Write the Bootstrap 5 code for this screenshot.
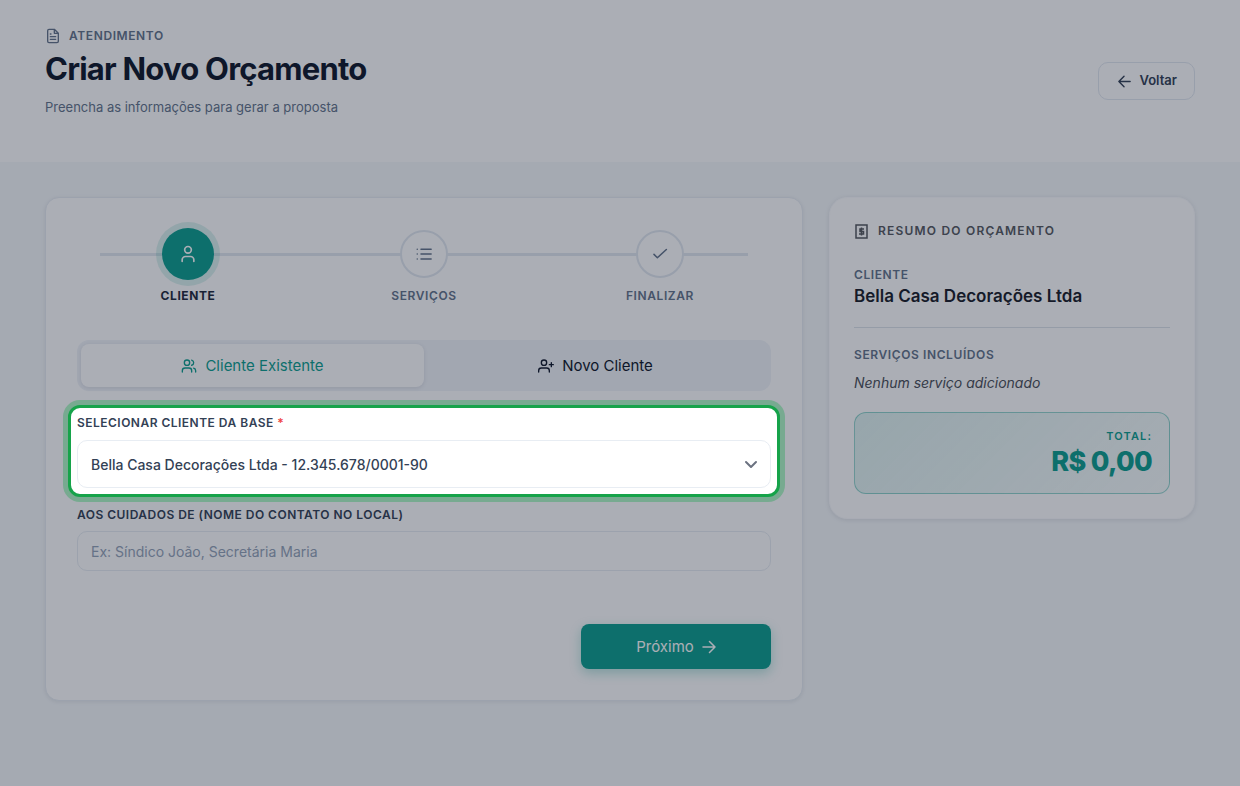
<!DOCTYPE html>
<html lang="pt-BR">
<head>
<meta charset="utf-8">
<meta name="viewport" content="width=device-width, initial-scale=1">
<title>Criar Novo Orçamento</title>
<link href="https://cdn.jsdelivr.net/npm/bootstrap@5.3.0/dist/css/bootstrap.min.css" rel="stylesheet">
<style>
  :root { --teal: #0d9f8f; --slate: #64748b; --ink: #334155; --line: #e2e8f0; }
  body { font-family: Inter, "Liberation Sans", sans-serif; background: #f6f9fb; color: #1e293b; min-height: 100vh; }
  svg { fill: none; stroke: currentColor; stroke-width: 2; stroke-linecap: round; stroke-linejoin: round; flex: none; }
  .page-x { padding-left: 45px; padding-right: 45px; }
  .page-heading { padding-top: 27px; padding-bottom: 45px; }
  .eyebrow { font-size: 12px; line-height: 18px; font-weight: 600; letter-spacing: .05em; text-transform: uppercase; color: var(--slate); }
  .page-title { font-size: 31px; line-height: 40px; font-weight: 700; letter-spacing: -.025em; color: #0f172a; margin: 4px 0 8px; }
  .page-sub { font-size: 13px; line-height: 20px; color: var(--slate); }
  .btn-back { --bs-btn-border-color: var(--line); --bs-btn-color: var(--ink); --bs-btn-border-radius: 10px; --bs-btn-font-size: 13px; --bs-btn-font-weight: 600; height: 38px; padding: 0 17px 0 18px; }
  .main-row { --bs-gutter-x: 26px; --bs-gutter-y: 26px; padding-top: 35px; }
  .panel { background: #fff; border: 1px solid #e8edf3; border-radius: 14px; box-shadow: 0 1px 4px rgba(15,23,42,.08); }
  .panel-form { padding: 30px 24px 31px; }
  .form-area { padding: 0 7px; }
  .stepper { position: relative; margin-bottom: 35px; }
  .stepper::before { content: ""; position: absolute; left: 30px; right: 30px; top: 25px; height: 3px; background: var(--line); }
  .step-dot { position: relative; width: 48px; height: 48px; margin: 2px 0; border: 2px solid var(--line); border-radius: 50%; background: #fff; color: var(--slate); }
  .step-dot.active { width: 52px; height: 52px; margin: 0; border: 0; background: var(--teal); color: #fff; box-shadow: 0 0 0 6px rgba(13,159,143,.15); }
  .step-name { font-size: 12px; line-height: 18px; margin-top: 7px; font-weight: 600; letter-spacing: .05em; color: var(--slate); }
  .active + .step-name { color: #1e293b; font-weight: 700; }
  .switcher { background: #f1f4f9; border-radius: 12px; padding: 4px; margin-bottom: 14px; }
  .switcher .btn { --bs-btn-border-width: 0; --bs-btn-border-radius: 8px; --bs-btn-color: #0f172a; --bs-btn-font-size: 15px; --bs-btn-line-height: 25px; height: 43px; flex: 1; }
  .switcher .btn.current { background: #fff; color: var(--teal); box-shadow: 0 1px 4px rgba(15,23,42,.1); }
  .tour-target { position: relative; z-index: 1050; margin: 0 -9px; padding: 6px; border: 3px solid #16a34a; border-radius: 12px; background: #fff; box-shadow: 0 0 0 5px rgba(22,163,74,.35), 0 0 0 9999px rgba(15,23,42,.35); }
  .field-name { display: block; font-size: 12px; line-height: 18px; font-weight: 600; letter-spacing: .04em; color: var(--ink); margin-bottom: 8px; }
  .required { color: #ef4444; }
  .field { font-size: 14px; border-color: #e8edf3; border-radius: 10px; padding: 0 13px; height: 40px; color: var(--ink); }
  .field::placeholder { color: #94a3b8; }
  .field-select { height: 48px; font-weight: 500; background-position: right 11px center; background-size: 16px; background-image: url("data:image/svg+xml,%3csvg xmlns='http://www.w3.org/2000/svg' viewBox='0 0 16 16'%3e%3cpath fill='none' stroke='%236b7280' stroke-linecap='round' stroke-linejoin='round' stroke-width='2' d='m3 6 5 5 5-5'/%3e%3c/svg%3e"); }
  .contact { margin-top: 9px; margin-bottom: 53px; }
  .contact .field-name { margin-bottom: 7px; }
  .btn-next { --bs-btn-color: #fff; --bs-btn-bg: var(--teal); --bs-btn-hover-color: #fff; --bs-btn-hover-bg: #0b8377; --bs-btn-border-width: 0; --bs-btn-border-radius: 8px; --bs-btn-font-size: 15px; --bs-btn-line-height: 25px; width: 190px; height: 45px; box-shadow: 0 4px 12px rgba(13,159,143,.3); }
  .panel-summary { padding: 24px; border-radius: 18px; border-color: #fafbfd; box-shadow: 0 1px 5px rgba(15,23,42,.1); }
  .summary-title { font-size: 12px; line-height: 18px; font-weight: 600; letter-spacing: .1em; color: #56595f; margin-bottom: 26px; }
  .summary-client { font-size: 17px; line-height: 24px; font-weight: 600; padding-bottom: 19px; border-bottom: 1px solid #dde3ea; margin-bottom: 18px; color: #1a1d29; }
  .summary-empty { font-size: 14px; line-height: 22px; color: #4b4f58; margin: 8px 0 18px; }
  .total-box { border: 1px solid rgba(13,159,143,.4); border-radius: 12px; padding: 14px 17px; background: linear-gradient(135deg, rgba(13,159,143,.13), rgba(13,159,143,.03)); color: var(--teal); }
  .total-name { font-size: 11px; line-height: 18px; font-weight: 600; letter-spacing: .1em; }
  .total-value { font-size: 27px; line-height: 34px; font-weight: 800; letter-spacing: -.025em; }
</style>
</head>
<body>
<header class="page-x bg-white d-flex align-items-center justify-content-between">
  <div class="page-heading">
    <div class="eyebrow d-flex align-items-center gap-2">
      <svg width="16" height="16" viewBox="0 0 24 24"><path d="M14 2H6a2 2 0 0 0-2 2v16a2 2 0 0 0 2 2h12a2 2 0 0 0 2-2V8zM14 2v6h6M8 9h1M8 13h8M8 17h8"/></svg>
      <span>Atendimento</span>
    </div>
    <h1 class="page-title">Criar Novo Orçamento</h1>
    <p class="page-sub mb-0">Preencha as informações para gerar a proposta</p>
  </div>
  <button type="button" class="btn btn-back d-flex align-items-center gap-2">
    <svg width="15" height="15" viewBox="0 0 16 16"><path d="M14 8H2M7.500 2.500 2 8l5.500 5.500" style="stroke-width:1.500"/></svg>
    Voltar
  </button>
</header>

<main class="page-x">
  <div class="row main-row align-items-start">
    <div class="col-lg-8">
      <form class="panel panel-form">
        <div class="stepper d-flex text-center">
          <div class="flex-fill w-100 d-flex flex-column align-items-center">
            <div class="step-dot active d-flex align-items-center justify-content-center">
              <svg width="20" height="20" viewBox="0 0 24 24"><circle cx="12" cy="7" r="4"/><path d="M5 21v-2a4 4 0 0 1 4-4h6a4 4 0 0 1 4 4v2"/></svg>
            </div>
            <div class="step-name">CLIENTE</div>
          </div>
          <div class="flex-fill w-100 d-flex flex-column align-items-center">
            <div class="step-dot d-flex align-items-center justify-content-center">
              <svg width="18" height="18" viewBox="0 0 24 24"><path d="M8 5.500h13.500M8 12h13.500M8 18.500h13.500M3 5.500h0M3 12h0M3 18.500h0"/></svg>
            </div>
            <div class="step-name">SERVIÇOS</div>
          </div>
          <div class="flex-fill w-100 d-flex flex-column align-items-center">
            <div class="step-dot d-flex align-items-center justify-content-center">
              <svg width="18" height="18" viewBox="0 0 24 24"><path d="m4 12.500 4.500 4.500L20.500 6"/></svg>
            </div>
            <div class="step-name">FINALIZAR</div>
          </div>
        </div>

        <div class="form-area">
          <div class="switcher d-flex">
            <button type="button" class="btn current d-flex align-items-center justify-content-center gap-2">
              <svg width="16" height="16" viewBox="0 0 24 24"><circle cx="9" cy="7" r="4"/><path d="M2 21v-2a4 4 0 0 1 4-4h6a4 4 0 0 1 4 4v2M16 3.130a4 4 0 0 1 0 7.750M22 21v-2a4 4 0 0 0-3-3.850"/></svg>
              Cliente Existente
            </button>
            <button type="button" class="btn d-flex align-items-center justify-content-center gap-2">
              <svg width="16" height="16" viewBox="0 0 24 24"><circle cx="9" cy="7" r="4"/><path d="M1 21v-2a4 4 0 0 1 4-4h8a4 4 0 0 1 4 4v2M17 10h6M20 7v6"/></svg>
              Novo Cliente
            </button>
          </div>

          <div class="tour-target">
            <label class="field-name" for="cliente">SELECIONAR CLIENTE DA BASE <span class="required">*</span></label>
            <select id="cliente" class="form-select field field-select">
              <option>Bella Casa Decorações Ltda - 12.345.678/0001-90</option>
            </select>
          </div>

          <div class="contact">
            <label class="field-name" for="contato">AOS CUIDADOS DE (NOME DO CONTATO NO LOCAL)</label>
            <input id="contato" type="text" class="form-control field bg-white" placeholder="Ex: Síndico João, Secretária Maria">
          </div>

          <div class="d-flex justify-content-end">
            <button type="button" class="btn btn-next d-flex align-items-center justify-content-center gap-2">
              Próximo
              <svg width="14" height="14" viewBox="0 0 14 14"><path d="M1 7h12M7.500 1.500l5.500 5.500-5.500 5.500" style="stroke-width:1.500"/></svg>
            </button>
          </div>
        </div>
      </form>
    </div>

    <div class="col-lg-4">
      <aside class="panel panel-summary">
        <h2 class="summary-title d-flex align-items-center gap-2">
          <svg width="16" height="16" viewBox="0 0 16 16"><path d="M2 2h11v13H2z" style="stroke-width:1.500;stroke-linejoin:miter"/><path d="M10 6H6v2.500h3.500V11H5M7.500 4.500v8" style="stroke-width:1.500;stroke-linecap:butt;stroke-linejoin:miter"/></svg>
          RESUMO DO ORÇAMENTO
        </h2>
        <div class="eyebrow">Cliente</div>
        <div class="summary-client">Bella Casa Decorações Ltda</div>
        <div class="eyebrow">Serviços incluídos</div>
        <p class="summary-empty fst-italic">Nenhum serviço adicionado</p>
        <div class="total-box text-end">
          <div class="total-name">TOTAL:</div>
          <div class="total-value">R$ 0,00</div>
        </div>
      </aside>
    </div>
  </div>
</main>
<script src="https://cdn.jsdelivr.net/npm/bootstrap@5.3.0/dist/js/bootstrap.bundle.min.js"></script>
</body>
</html>
